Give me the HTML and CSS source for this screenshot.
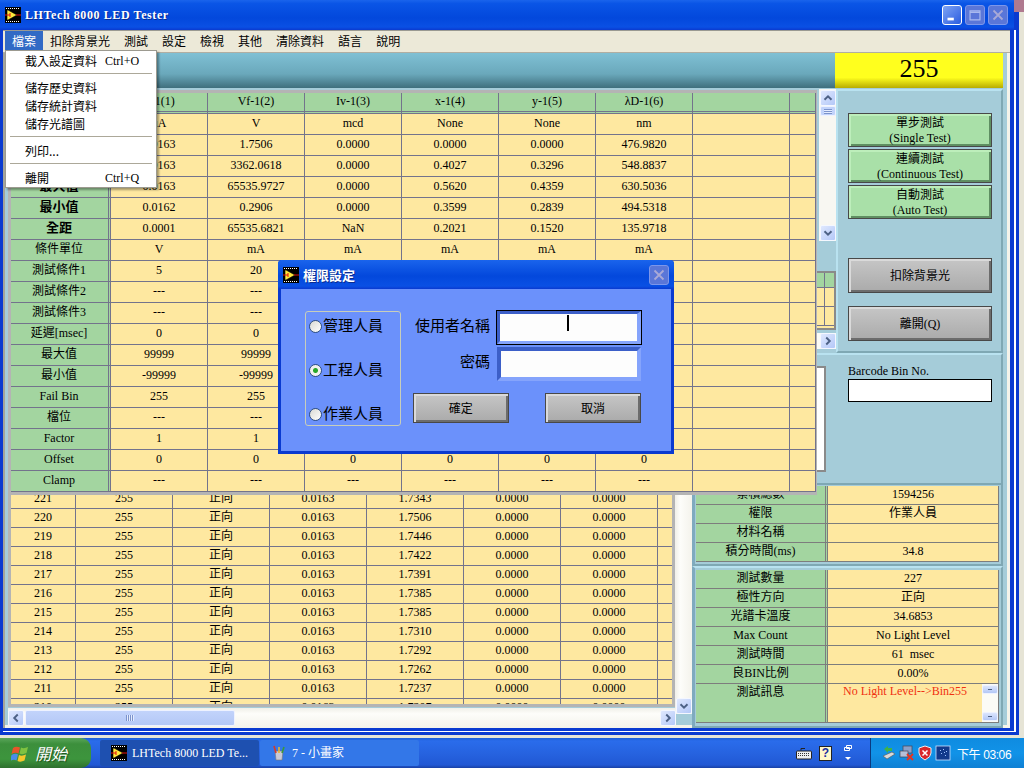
FILE: index.html
```html
<!DOCTYPE html>
<html lang="zh-Hant">

<head>
    <meta charset="UTF-8">
    <title>LHTech 8000 LED Tester</title>
    <link rel="stylesheet" href="styles.css">
</head>

<body>
    <svg class="defs" width="0" height="0">
        <!-- 程式圖示 -->
        <symbol id="lv" viewBox="0 0 16 16">
            <rect width="16" height="16" fill="#000" />
            <path d="M1 1h1v1H1zM3 1h1v1H3zM5 1h1v1H5zM7 1h1v1H7zM9 1h1v1H9zM11 1h1v1h-1zM13 1h1v1h-1zM1 14h1v1H1zM3 14h1v1H3zM5 14h1v1H5zM7 14h1v1H7zM9 14h1v1H9zM11 14h1v1h-1zM13 14h1v1h-1z" fill="#fff" />
            <path d="M2 3v10h1l9-5-9-5z" fill="#ffe93c" stroke="#000" stroke-width=".6" />
            <path d="M0 8h5M5 6v4M11 8h5" stroke="#e01010" stroke-width="1" />
        </symbol>
        <symbol id="chev" viewBox="0 0 16 16">
            <path d="M4 10l4-4 4 4" fill="none" stroke="#4d6185" stroke-width="2.2" />
        </symbol>
    </svg>

    <!-- 後面的視窗 -->
    <div class="back-window"></div>
    <div class="back-corner"></div>

    <div class="window">
        <div class="titlebar">
            <svg class="lv-icon"><use href="#lv" /></svg>
            <span class="title-text">LHTech 8000 LED Tester</span>
            <div class="win-buttons">
                <span class="win-btn min"><svg viewBox="0 0 20 20"><rect x="5" y="13" width="7" height="3" fill="#fff" /></svg></span>
                <span class="win-btn off"><svg viewBox="0 0 20 20"><path d="M4.500 5.500h11v10h-11zM4.500 7h11" fill="none" stroke="#a9b9ee" stroke-width="1.300" /></svg></span>
                <span class="win-btn off"><svg viewBox="0 0 20 20"><path d="M5 5l10 10M15 5L5 15" stroke="#a9a9d6" stroke-width="2" /></svg></span>
            </div>
        </div>

        <div class="menubar">
            <span class="menu-item active">檔案</span>
            <span class="menu-item">扣除背景光</span>
            <span class="menu-item">測試</span>
            <span class="menu-item">設定</span>
            <span class="menu-item">檢視</span>
            <span class="menu-item">其他</span>
            <span class="menu-item">清除資料</span>
            <span class="menu-item">語言</span>
            <span class="menu-item">說明</span>
        </div>

        <div class="content">
            <div class="strip">
                <div class="strip-teal"></div>
                <div class="strip-bin">255</div>
            </div>

            <div class="workspace">
                <!-- 歷史資料 -->
                <div class="history">
                    <div class="history-row">
                        <div class="history-wrap">
                            <table class="grid history-table">
                                <colgroup>
                                    <col class="c-no">
                                    <col class="c-97"><col class="c-97"><col class="c-97"><col class="c-97"><col class="c-97"><col class="c-97">
                                    <col class="c-end">
                                </colgroup>
                                <tr><td>221</td><td>255</td><td>正向</td><td>0.0163</td><td>1.7343</td><td>0.0000</td><td>0.0000</td><td></td></tr>
                                <tr><td>220</td><td>255</td><td>正向</td><td>0.0163</td><td>1.7506</td><td>0.0000</td><td>0.0000</td><td></td></tr>
                                <tr><td>219</td><td>255</td><td>正向</td><td>0.0163</td><td>1.7446</td><td>0.0000</td><td>0.0000</td><td></td></tr>
                                <tr><td>218</td><td>255</td><td>正向</td><td>0.0163</td><td>1.7422</td><td>0.0000</td><td>0.0000</td><td></td></tr>
                                <tr><td>217</td><td>255</td><td>正向</td><td>0.0163</td><td>1.7391</td><td>0.0000</td><td>0.0000</td><td></td></tr>
                                <tr><td>216</td><td>255</td><td>正向</td><td>0.0163</td><td>1.7385</td><td>0.0000</td><td>0.0000</td><td></td></tr>
                                <tr><td>215</td><td>255</td><td>正向</td><td>0.0163</td><td>1.7385</td><td>0.0000</td><td>0.0000</td><td></td></tr>
                                <tr><td>214</td><td>255</td><td>正向</td><td>0.0163</td><td>1.7310</td><td>0.0000</td><td>0.0000</td><td></td></tr>
                                <tr><td>213</td><td>255</td><td>正向</td><td>0.0163</td><td>1.7292</td><td>0.0000</td><td>0.0000</td><td></td></tr>
                                <tr><td>212</td><td>255</td><td>正向</td><td>0.0163</td><td>1.7262</td><td>0.0000</td><td>0.0000</td><td></td></tr>
                                <tr><td>211</td><td>255</td><td>正向</td><td>0.0163</td><td>1.7237</td><td>0.0000</td><td>0.0000</td><td></td></tr>
                                <tr><td>210</td><td>255</td><td>正向</td><td>0.0163</td><td>1.7207</td><td>0.0000</td><td>0.0000</td><td></td></tr>
                            </table>
                        </div>
                        <div class="v-scroll">
                            <span class="sb-btn down"><svg><use href="#chev" /></svg></span>
                        </div>
                    </div>
                    <div class="h-scroll">
                        <span class="sb-btn left"><svg><use href="#chev" /></svg></span>
                        <span class="sb-thumb"><i></i></span>
                        <span class="sb-btn right"><svg><use href="#chev" /></svg></span>
                    </div>
                </div>

                <!-- 規格表後面的捲軸與小表格 -->
                <div class="middle">
                    <div class="mid-scroll">
                        <span class="sb-btn up"><svg><use href="#chev" /></svg></span>
                        <span class="sb-grip"><i></i></span>
                        <span class="sb-btn down"><svg><use href="#chev" /></svg></span>
                    </div>
                    <div class="mini-table">
                        <div class="mini-head"></div>
                        <div class="mini-cell"></div>
                        <div class="mini-cell"></div>
                    </div>
                    <div class="mini-scroll">
                        <span class="sb-btn right"><svg><use href="#chev" /></svg></span>
                    </div>
                </div>

                <div class="panel controls">
                    <div class="btn-stack">
                        <button class="btn green">單步測試<br>(Single Test)</button>
                        <button class="btn green">連續測試<br>(Continuous Test)</button>
                        <button class="btn green">自動測試<br>(Auto Test)</button>
                    </div>
                    <button class="btn gray tall">扣除背景光</button>
                    <button class="btn gray tall">離開(Q)</button>
                </div>

                <div class="panel barcode">
                    <div class="white-box"></div>
                    <div class="barcode-field">
                        <label>Barcode Bin No.</label>
                        <div class="barcode-input"></div>
                    </div>
                </div>

                <div class="panel stats">
                    <table class="grid info-table">
                        <tr><th>累積總數</th><td>1594256</td></tr>
                        <tr><th>權限</th><td>作業人員</td></tr>
                        <tr><th>材料名稱</th><td></td></tr>
                        <tr><th>積分時間(ms)</th><td>34.8</td></tr>
                    </table>
                </div>

                <div class="panel results">
                    <table class="grid info-table">
                        <tr><th>測試數量</th><td>227</td></tr>
                        <tr><th>極性方向</th><td>正向</td></tr>
                        <tr><th>光譜卡溫度</th><td>34.6853</td></tr>
                        <tr><th>Max Count</th><td>No Light Level</td></tr>
                        <tr><th>測試時間</th><td>61&nbsp;&nbsp;msec</td></tr>
                        <tr><th>良BIN比例</th><td>0.00%</td></tr>
                        <tr class="msg-row">
                            <th>測試訊息</th>
                            <td>
                                <div class="msg">
                                    <span class="msg-text">No Light Level--&gt;Bin255</span>
                                    <span class="msg-scroll"><i></i><i></i></span>
                                </div>
                            </td>
                        </tr>
                    </table>
                </div>
            </div>

            <!-- 規格表，蓋在歷史資料上面 -->
            <div class="spec-wrap">
                <table class="grid spec-table">
                    <colgroup>
                        <col class="c-label">
                        <col class="c-97"><col class="c-97"><col class="c-97"><col class="c-97"><col class="c-97"><col class="c-97"><col class="c-97">
                        <col class="c-tail">
                    </colgroup>
                    <tr class="head"><th></th><th>Ir-1(1)</th><th>Vf-1(2)</th><th>Iv-1(3)</th><th>x-1(4)</th><th>y-1(5)</th><th>λD-1(6)</th><th></th><th></th></tr>
                    <tr><th>單位</th><td>uA</td><td>V</td><td>mcd</td><td>None</td><td>None</td><td>nm</td><td></td><td></td></tr>
                    <tr><th class="strong">平均值</th><td>0.0163</td><td>1.7506</td><td>0.0000</td><td>0.0000</td><td>0.0000</td><td>476.9820</td><td></td><td></td></tr>
                    <tr><th class="strong">標準差</th><td>0.0163</td><td>3362.0618</td><td>0.0000</td><td>0.4027</td><td>0.3296</td><td>548.8837</td><td></td><td></td></tr>
                    <tr><th class="strong">最大值</th><td>0.0163</td><td>65535.9727</td><td>0.0000</td><td>0.5620</td><td>0.4359</td><td>630.5036</td><td></td><td></td></tr>
                    <tr><th class="strong">最小值</th><td>0.0162</td><td>0.2906</td><td>0.0000</td><td>0.3599</td><td>0.2839</td><td>494.5318</td><td></td><td></td></tr>
                    <tr><th class="strong">全距</th><td>0.0001</td><td>65535.6821</td><td>NaN</td><td>0.2021</td><td>0.1520</td><td>135.9718</td><td></td><td></td></tr>
                    <tr><th>條件單位</th><td>V</td><td>mA</td><td>mA</td><td>mA</td><td>mA</td><td>mA</td><td></td><td></td></tr>
                    <tr><th>測試條件1</th><td>5</td><td>20</td><td>20</td><td>20</td><td>20</td><td>20</td><td></td><td></td></tr>
                    <tr><th>測試條件2</th><td>---</td><td>---</td><td>---</td><td>---</td><td>---</td><td>---</td><td></td><td></td></tr>
                    <tr><th>測試條件3</th><td>---</td><td>---</td><td>---</td><td>---</td><td>---</td><td>---</td><td></td><td></td></tr>
                    <tr><th>延遲[msec]</th><td>0</td><td>0</td><td>0</td><td>0</td><td>0</td><td>0</td><td></td><td></td></tr>
                    <tr><th>最大值</th><td>99999</td><td>99999</td><td>99999</td><td>99999</td><td>99999</td><td>99999</td><td></td><td></td></tr>
                    <tr><th>最小值</th><td>-99999</td><td>-99999</td><td>-99999</td><td>-99999</td><td>-99999</td><td>-99999</td><td></td><td></td></tr>
                    <tr><th>Fail Bin</th><td>255</td><td>255</td><td>255</td><td>255</td><td>255</td><td>255</td><td></td><td></td></tr>
                    <tr><th>檔位</th><td>---</td><td>---</td><td>---</td><td>---</td><td>---</td><td>---</td><td></td><td></td></tr>
                    <tr><th>Factor</th><td>1</td><td>1</td><td>1</td><td>1</td><td>1</td><td>1</td><td></td><td></td></tr>
                    <tr><th>Offset</th><td>0</td><td>0</td><td>0</td><td>0</td><td>0</td><td>0</td><td></td><td></td></tr>
                    <tr><th>Clamp</th><td>---</td><td>---</td><td>---</td><td>---</td><td>---</td><td>---</td><td></td><td></td></tr>
                </table>
            </div>
        </div>

        <!-- 檔案選單 -->
        <div class="dropdown">
            <div class="drop-item"><span>截入設定資料</span><span class="key">Ctrl+O</span></div>
            <div class="drop-sep"></div>
            <div class="drop-item"><span>儲存歷史資料</span></div>
            <div class="drop-item"><span>儲存統計資料</span></div>
            <div class="drop-item"><span>儲存光譜圖</span></div>
            <div class="drop-sep"></div>
            <div class="drop-item"><span>列印...</span></div>
            <div class="drop-sep"></div>
            <div class="drop-item"><span>離開</span><span class="key">Ctrl+Q</span></div>
        </div>

        <!-- 權限設定對話框 -->
        <div class="dialog">
            <div class="dialog-title">
                <svg class="lv-icon"><use href="#lv" /></svg>
                <span class="dialog-name">權限設定</span>
                <span class="win-btn off dialog-close"><svg viewBox="0 0 20 20"><path d="M5 5l10 10M15 5L5 15" stroke="#a9a9d6" stroke-width="2" /></svg></span>
            </div>
            <div class="dialog-body">
                <div class="role-box">
                    <div class="role"><span class="radio"></span>管理人員</div>
                    <div class="role"><span class="radio on"></span>工程人員</div>
                    <div class="role"><span class="radio"></span>作業人員</div>
                </div>
                <div class="login">
                    <div class="field-row">
                        <span class="field-label">使用者名稱</span>
                        <span class="field-focus"><span class="field"><i class="caret"></i></span></span>
                    </div>
                    <div class="field-row">
                        <span class="field-label">密碼</span>
                        <span class="field-plain"><span class="field"></span></span>
                    </div>
                    <div class="dialog-actions">
                        <button class="btn gray small">確定</button>
                        <button class="btn gray small">取消</button>
                    </div>
                </div>
            </div>
        </div>
    </div>

    <!-- 工作列 -->
    <div class="taskbar">
        <div class="start">
            <svg class="flag" viewBox="0 0 20 20">
                <path d="M2 5q3-2 7-.500l-1.500 6q-3-1.500-7 .500z" fill="#e8552a" />
                <path d="M10 4.500q3 1.500 7-.500l-1.500 6q-4 2-7 .500z" fill="#7fc241" />
                <path d="M.500 12q4-2 6.500-.500l-1.500 6q-3-1.500-6.500.500z" fill="#4a8de8" />
                <path d="M8 12q3 1.500 7-.500l-1.500 6q-4 2-7 .500z" fill="#f5c72c" />
            </svg>
            <span>開始</span>
        </div>
        <div class="task active">
            <svg class="lv-icon"><use href="#lv" /></svg>
            <span>LHTech 8000 LED Te...</span>
        </div>
        <div class="task">
            <svg class="paint" viewBox="0 0 16 16">
                <path d="M4 6h8l-1 9H5z" fill="#c9c9d6" stroke="#777" stroke-width=".6" />
                <path d="M5 8L3 1" stroke="#d63a2a" stroke-width="1.600" />
                <path d="M8 8V2" stroke="#e9b52c" stroke-width="1.600" />
                <path d="M11 8l2-6" stroke="#3a9a3a" stroke-width="1.600" />
            </svg>
            <span>7 - 小畫家</span>
        </div>
        <div class="lang-bar">
            <svg class="kbd" viewBox="0 0 16 12">
                <path d="M5 3V1h4" fill="none" stroke="#222" />
                <rect x=".5" y="3.500" width="15" height="8" rx="1" fill="#eee" stroke="#222" />
                <path d="M2 6h12M2 8h12" stroke="#333" stroke-dasharray="1 1" />
            </svg>
            <span class="help">?</span>
            <svg class="restore" viewBox="0 0 8 16">
                <path d="M2.500 .500h5v3h-5zM.500 2.500h5v3h-5z" fill="#2a62d8" stroke="#fff" />
                <path d="M1 12h6l-3 3z" fill="#fff" />
            </svg>
        </div>
        <div class="tray">
            <svg class="tray-icon" viewBox="0 0 16 16">
                <path d="M2 11l9-4 3 2-8 5z" fill="#d9d9d9" stroke="#555" stroke-width=".6" />
                <path d="M3 4l4-3v2h4v3H7v2z" fill="#3fb24a" />
            </svg>
            <svg class="tray-icon" viewBox="0 0 16 16">
                <rect x="4" y="1" width="9" height="7" fill="#8aa0c8" stroke="#445" stroke-width=".7" />
                <rect x="1" y="6" width="8" height="6" fill="#b4c0d8" stroke="#445" stroke-width=".7" />
                <path d="M8 9l6 6M14 9l-6 6" stroke="#e8331f" stroke-width="2" />
            </svg>
            <svg class="tray-icon" viewBox="0 0 16 16">
                <path d="M8 1l6 2v5q0 4-6 7-6-3-6-7V3z" fill="#d8252a" stroke="#eee" stroke-width="1" />
                <path d="M5.500 5.500l5 5M10.500 5.500l-5 5" stroke="#fff" stroke-width="1.500" />
            </svg>
            <svg class="tray-icon" viewBox="0 0 16 16">
                <rect x="1" y="1" width="14" height="14" fill="#123a8c" stroke="#cfe0ff" stroke-width=".8" />
                <path d="M5 5h1v1H5zM8 4h1v1H8zM11 6h1v1h-1zM6 8h1v1H6zM9 7h1v1H9zM10 10h1v1h-1z" fill="#9fc4ff" />
            </svg>
            <span class="clock">下午 03:06</span>
        </div>
    </div>
</body>

</html>
```

FILE: styles.css
```css
* {
    margin: 0;
    padding: 0;
    box-sizing: border-box;
}

html,
body {
    width: 1024px;
    height: 768px;
    overflow: hidden;
}

body {
    position: relative;
    display: flex;
    flex-direction: column;
    justify-content: flex-end;
    background-color: #e6e4d6;
    font: 12px/14px "Liberation Serif", "Noto Sans CJK TC", serif;
    color: #000;
}

.defs {
    position: absolute;
}

/* 視窗 */
.back-window {
    position: absolute;
    left: 0;
    top: 0;
    width: 1019px;
    height: 735px;
    background-color: #fff;
    border: 3px solid #0a3ad0;
    border-top-width: 30px;
}

.back-corner {
    position: absolute;
    left: 1014px;
    top: 0;
    width: 10px;
    height: 12px;
    background-color: #b07a90;
}

.window {
    position: absolute;
    left: 0;
    top: 0;
    width: 1014px;
    height: 731px;
    display: flex;
    flex-direction: column;
    background-color: #0a45dc;
    border: solid #0a3ad0;
    border-width: 0 4px 3px 3px;
}

.titlebar {
    height: 30px;
    margin: 0 -4px 0 -3px;
    padding-left: 5px;
    display: flex;
    align-items: center;
    background: linear-gradient(#1a64ec 0, #0a55e6 12%, #0348dc 60%, #0a50e4 90%, #0a3ad0 100%);
}

.lv-icon {
    width: 16px;
    height: 16px;
    flex: none;
}

.title-text {
    margin-left: 4px;
    color: #fff;
    font-weight: bold;
    font-size: 12px;
    letter-spacing: .6px;
    text-shadow: 1px 1px 0 #0a2c90;
}

.win-buttons {
    margin-left: auto;
    margin-right: 6px;
    display: flex;
    gap: 3px;
}

.win-btn {
    display: block;
    width: 20px;
    height: 20px;
    border: 1px solid #dfe6f8;
    border-radius: 3px;
}

.win-btn svg {
    display: block;
    width: 18px;
    height: 18px;
}

.win-btn.min {
    background: linear-gradient(135deg, #7fa4f4, #2a5ce0);
    border-color: #fff;
}

.win-btn.off {
    background-color: #5a76d8;
    border-color: #7d96ea;
}

.menubar {
    height: 23px;
    padding-left: 2px;
    display: flex;
    align-items: flex-start;
    background-color: #ece9d8;
    border-top: 1px solid #9a9a92;
    border-bottom: 1px solid #b0aea2;
}

.menu-item {
    height: 20px;
    padding: 3px 7px 0;
    font-family: "Noto Sans CJK TC", sans-serif;
}

.menu-item.active {
    background-color: #316ac5;
    color: #fff;
}

.content {
    position: relative;
    flex: 1;
    display: flex;
    flex-direction: column;
    background-color: #a5ccd9;
    box-shadow: inset 2px 0 0 #a4a49a, inset -3px 0 0 #f4f3ea, inset 0 -3px 0 #f4f3ea;
}

.strip {
    height: 35px;
    margin-left: 2px;
    margin-right: 7px;
    display: flex;
}

.strip-teal {
    flex: 1;
    background: linear-gradient(#7fc0d4, #6aa8bb 60%, #3f6f7d);
}

.strip-bin {
    width: 168px;
    text-align: center;
    font-size: 26px;
    line-height: 31px;
    background: linear-gradient(#ffff1e, #ffff1e 70%, #b8ac00);
}

/* 主要區域 */
.workspace {
    flex: 1;
    display: grid;
    grid-template-columns: 689px 144px 167px;
    grid-template-rows: 264px 132px 81px 1fr;
    grid-template-areas:
        "history middle controls"
        "history barcode barcode"
        "history stats stats"
        "history results results";
    padding-top: 1px;
}

.panel {
    background-color: #a5ccd9;
    border: 2px solid;
    border-color: #b9e2f0 #7fa8b4 #7fa8b4 #b9e2f0;
}

.grid {
    table-layout: fixed;
    border-collapse: separate;
    border-spacing: 0;
    background-color: #fee8a0;
}

.grid td,
.grid th {
    padding: 0 0 2px;
    text-align: center;
    font-weight: normal;
    border-right: 1px solid #73738c;
    border-bottom: 1px solid #73738c;
    overflow: hidden;
    white-space: nowrap;
}

.grid th {
    background-color: #a3d5a0;
}

.c-no {
    width: 65px;
}

.c-97 {
    width: 97px;
}

.c-end {
    width: 15px;
}

.c-label {
    width: 100px;
}

.c-tail {
    width: 26px;
}

/* 歷史資料 */
.history {
    grid-area: history;
    padding: 401px 0 0 5px;
    display: flex;
    flex-direction: column;
}

.history-row {
    display: flex;
    height: 217px;
}

.history-wrap {
    width: 667px;
    overflow: hidden;
    border: 3px solid #b4b4b4;
    border-top: 0;
}

.history-table {
    width: 662px;
}

.history-table tr {
    height: 19px;
}

.v-scroll {
    flex: none;
    width: 17px;
    height: 224px;
    display: flex;
    align-items: flex-end;
    padding-left: 1px;
    background: linear-gradient(90deg, #f0efe8, #fdfdfa 30%, #f4f3ec);
}

.h-scroll {
    width: 668px;
    height: 19px;
    margin-top: 1px;
    display: flex;
    align-items: center;
    background: linear-gradient(#f0efe8, #fdfdfa 30%, #f4f3ec);
}

.sb-btn {
    display: block;
    flex: none;
    width: 16px;
    height: 16px;
    background: linear-gradient(135deg, #dfe8fe, #b4c8f8);
    border: 1px solid #f4f7ff;
    border-radius: 2px;
}

.sb-btn svg {
    display: block;
    width: 14px;
    height: 14px;
}

.sb-btn.down svg {
    transform: rotate(180deg);
}

.sb-btn.left svg {
    transform: rotate(-90deg);
}

.sb-btn.right svg {
    transform: rotate(90deg);
}

.sb-thumb {
    width: 210px;
    height: 16px;
    margin-left: 1px;
    margin-right: auto;
    display: flex;
    justify-content: center;
    align-items: center;
    background: linear-gradient(#c2d3fb, #b4c8f6);
    border: 1px solid #eef2ff;
    border-radius: 2px;
}

.sb-thumb i {
    width: 8px;
    height: 6px;
    background: repeating-linear-gradient(90deg, #7c93cc 0 1px, #e4ecff 1px 2px);
}

/* 中間 */
.middle {
    grid-area: middle;
    display: flex;
    flex-direction: column;
    align-items: flex-end;
}

.mid-scroll {
    width: 17px;
    height: 152px;
    padding-top: 1px;
    display: flex;
    flex-direction: column;
    align-items: center;
    background-color: #f8f7f2;
}

.mid-scroll .down {
    margin-top: auto;
}

.sb-grip {
    display: flex;
    justify-content: center;
    align-items: center;
    width: 16px;
    height: 10px;
    background-color: #c2d3fb;
    border: 1px solid #eef2ff;
    border-radius: 2px;
}

.sb-grip i {
    width: 8px;
    height: 5px;
    background: repeating-linear-gradient(#7c93cc 0 1px, #e4ecff 1px 2px);
}

.mini-table {
    width: 20px;
    height: 59px;
    margin-top: 30px;
    background-color: #fee8a0;
    border: 2px solid #8a8a8a;
    border-left: 0;
}

.mini-head,
.mini-cell {
    height: 19px;
    border-bottom: 1px solid #73738c;
    background-image: linear-gradient(#73738c, #73738c);
    background-size: 1px 100%;
    background-position: 8px 0;
    background-repeat: no-repeat;
}

.mini-head {
    height: 15px;
    background-color: #a3d5a0;
}

.mini-scroll {
    width: 20px;
    height: 16px;
    margin-top: 3px;
    display: flex;
    justify-content: flex-end;
    background-color: #fbfbf6;
}

/* 右邊按鈕 */
.controls {
    grid-area: controls;
    padding: 22px 9px 0 10px;
}

.btn-stack {
    display: flex;
    flex-direction: column;
    gap: 2px;
    margin-bottom: 39px;
}

.btn {
    display: block;
    width: 144px;
    height: 34px;
    padding-top: 2px;
    border: 1px solid #484848;
    font: 12px/15px "Liberation Serif", "Noto Sans CJK TC", serif;
    color: #000;
}

.btn.green {
    background-color: #a9e0a8;
    box-shadow: inset 2px 2px 0 #bdeebb, inset -2px -2px 0 #5f8f62;
}

.btn.gray {
    background: linear-gradient(#c6c6c6, #aaaaaa);
    box-shadow: inset 2px 2px 0 #dadada, inset -2px -2px 0 #6c6c6c;
}

.btn.tall {
    height: 35px;
    margin-bottom: 13px;
}

.btn.small {
    width: 96px;
    height: 30px;
}

.barcode {
    grid-area: barcode;
    padding: 9px 9px 0 122px;
    display: flex;
    justify-content: space-between;
}

.white-box {
    width: 10px;
    height: 106px;
    margin-top: 2px;
    background-color: #fff;
    border: 2px solid #8a8a8a;
    border-left: 0;
}

.barcode-field label {
    display: block;
    line-height: 15px;
}

.barcode-input {
    width: 144px;
    height: 23px;
    background-color: #fff;
    border: 1px solid #000;
}

/* 右下表格 */
.stats,
.results {
    border-left: 3px solid #7faabf;
    padding-left: 1px;
}

.stats {
    grid-area: stats;
    border-top: 0;
    padding-top: 1px;
}

.results {
    grid-area: results;
    padding-top: 2px;
}

.info-table {
    width: 303px;
}

.info-table tr {
    height: 19px;
}

.info-table th {
    width: 132px;
    border-right: 3px double #7d7d7d;
}

.info-table th,
.info-table td {
    border-bottom-color: #7d7d7d;
    border-right-color: #7d7d7d;
}

.info-table .msg-row {
    height: 39px;
}

.msg-row th {
    vertical-align: top;
    padding-top: 1px;
}

.msg-row td {
    padding: 0;
}

.msg {
    height: 38px;
    display: flex;
    justify-content: space-between;
}

.msg-text {
    padding: 0 0 0 15px;
    color: #f03010;
}

.msg-scroll {
    width: 16px;
    padding: 1px 0;
    display: flex;
    flex-direction: column;
    justify-content: space-between;
    background-color: #fbfbf6;
}

.msg-scroll i {
    display: flex;
    justify-content: center;
    align-items: center;
    height: 9px;
    background: linear-gradient(#dbe5fd 0, #b4c8f6 100%);
    border: 1px solid #eef2ff;
    border-radius: 2px;
}

.msg-scroll i::after {
    content: "";
    width: 4px;
    height: 1px;
    background-color: #4d6185;
}

/* 規格表 */
.spec-wrap {
    position: absolute;
    left: 5px;
    top: 37px;
    width: 809px;
    height: 405px;
    background-color: #fee8a0;
    border: 3px solid #b4b4b4;
}

.spec-table {
    width: 803px;
}

.spec-table tr {
    height: 21px;
}

.spec-table tr.head th {
    border-bottom: 3px double #73738c;
}

.spec-table th:first-child {
    padding-right: 1px;
    border-right: 3px double #73738c;
}

.spec-table .strong {
    font-size: 13px;
    font-weight: bold;
}

/* 檔案選單 */
.dropdown {
    position: absolute;
    left: 2px;
    top: 50px;
    width: 152px;
    height: 138px;
    padding: 2px 2px 0;
    background-color: #fff;
    border: 1px solid #9c9a90;
    box-shadow: 2px 2px 2px rgba(0, 0, 0, .35);
    font-family: "Noto Sans CJK TC", sans-serif;
}

.drop-item {
    height: 18px;
    padding-left: 17px;
    display: flex;
    line-height: 16px;
}

.key {
    position: absolute;
    left: 99px;
    font-family: "Liberation Serif", serif;
}

.drop-sep {
    height: 1px;
    margin: 2px 2px 6px;
    background-color: #aca899;
}

/* 對話框 */
.dialog {
    position: absolute;
    left: 275px;
    top: 260px;
    width: 396px;
    height: 194px;
    display: flex;
    flex-direction: column;
    background-color: #6b91fb;
    border: 3px solid #0a3ad0;
    border-top: 0;
    border-radius: 4px 4px 0 0;
}

.dialog-title {
    height: 29px;
    margin: 0 -3px;
    padding-left: 5px;
    display: flex;
    align-items: center;
    background: linear-gradient(#1a64ec, #0348dc 55%, #0a50e4 90%, #0a3ad0);
    border-radius: 4px 4px 0 0;
}

.dialog-name {
    margin-left: 4px;
    color: #fff;
    font-size: 13px;
    font-weight: bold;
    text-shadow: 1px 1px 0 #0a2c90;
    font-family: "Noto Sans CJK TC", sans-serif;
}

.dialog-close {
    margin-left: auto;
    margin-right: 5px;
}

.dialog-body {
    flex: 1;
    padding: 21px 30px 0 24px;
    display: flex;
    align-items: flex-start;
}

.role-box {
    width: 96px;
    height: 115px;
    margin-top: 1px;
    padding: 3px 0 2px 3px;
    display: flex;
    flex-direction: column;
    justify-content: space-between;
    border: 1px solid #c8ceba;
    border-radius: 3px;
}

.role {
    display: flex;
    align-items: center;
    font-size: 15px;
    line-height: 20px;
    font-family: "Noto Sans CJK TC", sans-serif;
}

.radio {
    width: 13px;
    height: 13px;
    margin: 3px 1px 0 0;
    border-radius: 50%;
    border: 1px solid #2f4f7f;
    background: linear-gradient(135deg, #d9d9d3, #ffffff);
}

.radio.on {
    background: radial-gradient(circle, #2aa82a 0 2px, #f2f2ee 3px);
}

.login {
    margin-left: 12px;
    width: 229px;
}

.field-row {
    display: flex;
    align-items: center;
    justify-content: flex-end;
    gap: 7px;
    margin-bottom: 2px;
}

.field-label {
    font-size: 15px;
    margin-bottom: 6px;
    font-family: "Noto Sans CJK TC", sans-serif;
}

.field-focus,
.field-plain {
    display: block;
    flex: none;
}

.field-focus {
    width: 146px;
    height: 35px;
    margin: 0 -1px;
    border: 1px solid #000;
}

.field-plain {
    width: 144px;
    height: 34px;
}

.field {
    position: relative;
    display: block;
    height: 100%;
    background-color: #fdfdfd;
    border: 4px solid;
    border-color: #3c5fc8 #85a4fc #85a4fc #3c5fc8;
}

.field-focus .field {
    border-width: 3px 4px 3px 3px;
}

.caret {
    position: absolute;
    left: 67px;
    top: 1px;
    width: 2px;
    height: 16px;
    background-color: #000;
}

.dialog-actions {
    margin-top: 12px;
    display: flex;
    justify-content: space-between;
}

/* 工作列 */
.taskbar {
    position: relative;
    height: 30px;
    display: flex;
    align-items: stretch;
    color: #fff;
    background: linear-gradient(#1f5fd8, #2a6ceb 10%, #2663e0 50%, #2158d4 90%, #1941a5);
    font-family: "Liberation Serif", "Noto Sans CJK TC", serif;
}

.start {
    width: 91px;
    padding-left: 11px;
    display: flex;
    align-items: center;
    gap: 4px;
    background: linear-gradient(#5aa65a, #3c8f3c 20%, #3d953d 70%, #2e702e);
    border-radius: 0 10px 10px 0;
    font-style: italic;
    font-size: 16px;
    font-family: "Noto Sans CJK TC", sans-serif;
    text-shadow: 1px 1px 1px #1c4d1c;
}

.flag {
    width: 20px;
    height: 20px;
}

.task {
    width: 159px;
    height: 26px;
    margin-top: 2px;
    padding-left: 11px;
    display: flex;
    align-items: center;
    gap: 5px;
    background-color: #3377e8;
    border-radius: 2px;
}

.task.active {
    margin-left: 9px;
    margin-right: 1px;
    background-color: #1e50b0;
}

.paint {
    width: 16px;
    height: 16px;
}

.lang-bar {
    margin-left: auto;
    width: 78px;
    display: flex;
    align-items: center;
    gap: 7px;
    padding-left: 4px;
}

.kbd {
    width: 16px;
    height: 13px;
}

.help {
    width: 13px;
    height: 15px;
    background-color: #fff8c8;
    border: 1px solid #222;
    color: #1a2fa0;
    font: bold 12px/13px "Liberation Sans", sans-serif;
    text-align: center;
}

.restore {
    width: 8px;
    height: 16px;
    margin-left: 5px;
}

.tray {
    width: 154px;
    padding-left: 10px;
    display: flex;
    align-items: center;
    gap: 2px;
    background: linear-gradient(#0f8be0, #1193e8 50%, #0f80d4);
    border-left: 1px solid #0a3a80;
}

.tray-icon {
    width: 16px;
    height: 16px;
}

.clock {
    margin-left: 4px;
    letter-spacing: -.4px;
    font: 12px "Liberation Sans", "Noto Sans CJK TC", sans-serif;
}
```
